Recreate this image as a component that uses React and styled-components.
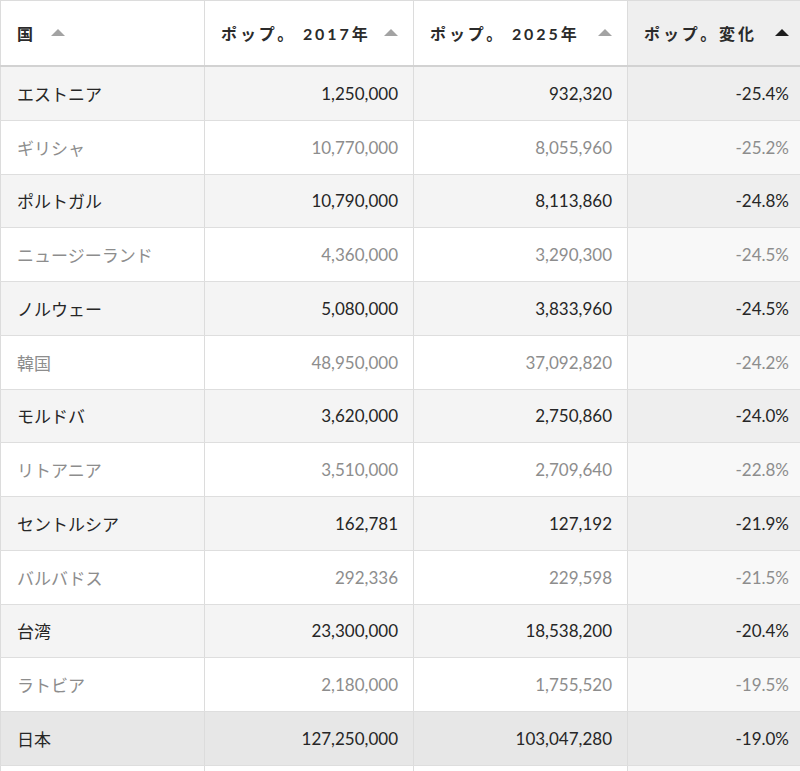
import React from "react";
import styled, { createGlobalStyle } from "styled-components";

const GlobalStyle = createGlobalStyle`
  html, body {
    margin: 0;
    padding: 0;
    background: #ffffff;
    overflow: hidden;
  }
  body {
    font-family: "Lato", "Noto Sans CJK JP", sans-serif;
    color: #222;
  }
`;

const columns = [
  { key: "name", label: "国", align: "left", width: 205 },
  { key: "p2017", label: "ポップ。 2017年", align: "right", width: 209 },
  { key: "p2025", label: "ポップ。 2025年", align: "right", width: 214 },
  { key: "change", label: "ポップ。変化", align: "right", width: 177, sorted: true },
];

const rows = [
  ["エストニア", "1,250,000", "932,320", "-25.4%"],
  ["ギリシャ", "10,770,000", "8,055,960", "-25.2%"],
  ["ポルトガル", "10,790,000", "8,113,860", "-24.8%"],
  ["ニュージーランド", "4,360,000", "3,290,300", "-24.5%"],
  ["ノルウェー", "5,080,000", "3,833,960", "-24.5%"],
  ["韓国", "48,950,000", "37,092,820", "-24.2%"],
  ["モルドバ", "3,620,000", "2,750,860", "-24.0%"],
  ["リトアニア", "3,510,000", "2,709,640", "-22.8%"],
  ["セントルシア", "162,781", "127,192", "-21.9%"],
  ["バルバドス", "292,336", "229,598", "-21.5%"],
  ["台湾", "23,300,000", "18,538,200", "-20.4%"],
  ["ラトビア", "2,180,000", "1,755,520", "-19.5%"],
  ["日本", "127,250,000", "103,047,280", "-19.0%", true],
  ["", "", "", ""],
];

function App() {
  return (
    <>
      <GlobalStyle />
      <Table>
        <HeaderRow>
          {columns.map((col, i) => (
            <HeadCell
              key={col.key}
              $width={col.width}
              $first={i === 0}
              $sorted={col.sorted}
              $align={col.align}
            >
              <HeadLabel>{col.label}</HeadLabel>
              <SortArrow $active={col.sorted} $inline={col.align === "left"} />
            </HeadCell>
          ))}
        </HeaderRow>
        {rows.map((row, r) => {
          const tone = row[4] ? "highlight" : r % 2 === 0 ? "odd" : "even";
          return (
            <BodyRow key={r}>
              {columns.map((col, i) => (
                <Cell
                  key={col.key}
                  $width={col.width}
                  $first={i === 0}
                  $align={col.align}
                  $tone={tone}
                  $sorted={col.sorted}
                >
                  {row[i]}
                </Cell>
              ))}
            </BodyRow>
          );
        })}
      </Table>
    </>
  );
}

const Table = styled.div`
  width: 805px;
  border-top: 1px solid #dcdcdc;
`;

const HeaderRow = styled.div`
  display: flex;
  height: 64px;
  border-bottom: 2px solid #d2d2d2;
`;

const HeadCell = styled.div`
  box-sizing: border-box;
  flex: 0 0 ${(p) => p.$width}px;
  width: ${(p) => p.$width}px;
  min-width: 0;
  display: flex;
  align-items: center;
  justify-content: ${(p) => (p.$align === "right" ? "space-between" : "flex-start")};
  padding: 0 15px 0 16px;
  border-right: 1px solid #dcdcdc;
  border-left: ${(p) => (p.$first ? "1px solid #dcdcdc" : "none")};
  background: ${(p) => (p.$sorted ? "#efefef" : "#ffffff")};
`;

const HeadLabel = styled.span`
  font-family: "Lato", "Noto Sans CJK JP", sans-serif;
  font-size: 16px;
  font-weight: 700;
  letter-spacing: 2.9px;
  color: #2b2b2b;
  white-space: pre;
`;

const SortArrow = styled.span`
  width: 0;
  height: 0;
  border-left: 7px solid transparent;
  border-right: 7px solid transparent;
  border-bottom: 7px solid ${(p) => (p.$active ? "#1e1e1e" : "#a3a3a3")};
  margin-bottom: 2px;
  margin-left: ${(p) => (p.$inline ? "15px" : "0")};
  flex: none;
`;

const BodyRow = styled.div`
  display: flex;
  height: 53.75px;
  box-sizing: border-box;
  border-bottom: 1px solid #dedede;
`;

const toneBg = {
  odd: ["#f4f4f4", "#eeeeee"],
  even: ["#ffffff", "#f8f8f8"],
  highlight: ["#e7e7e7", "#e7e7e7"],
};

const Cell = styled.div`
  box-sizing: border-box;
  flex: 0 0 ${(p) => p.$width}px;
  min-width: 0;
  display: flex;
  align-items: center;
  justify-content: ${(p) => (p.$align === "right" ? "flex-end" : "flex-start")};
  padding: 0 15px 0 16px;
  border-right: 1px solid #dcdcdc;
  border-left: ${(p) => (p.$first ? "1px solid #dcdcdc" : "none")};
  background: ${(p) => toneBg[p.$tone][p.$sorted ? 1 : 0]};
  color: ${(p) => (p.$tone === "even" ? "#8d8d8d" : "#262626")};
  font-size: 17px;
  white-space: nowrap;
`;

export default App;
